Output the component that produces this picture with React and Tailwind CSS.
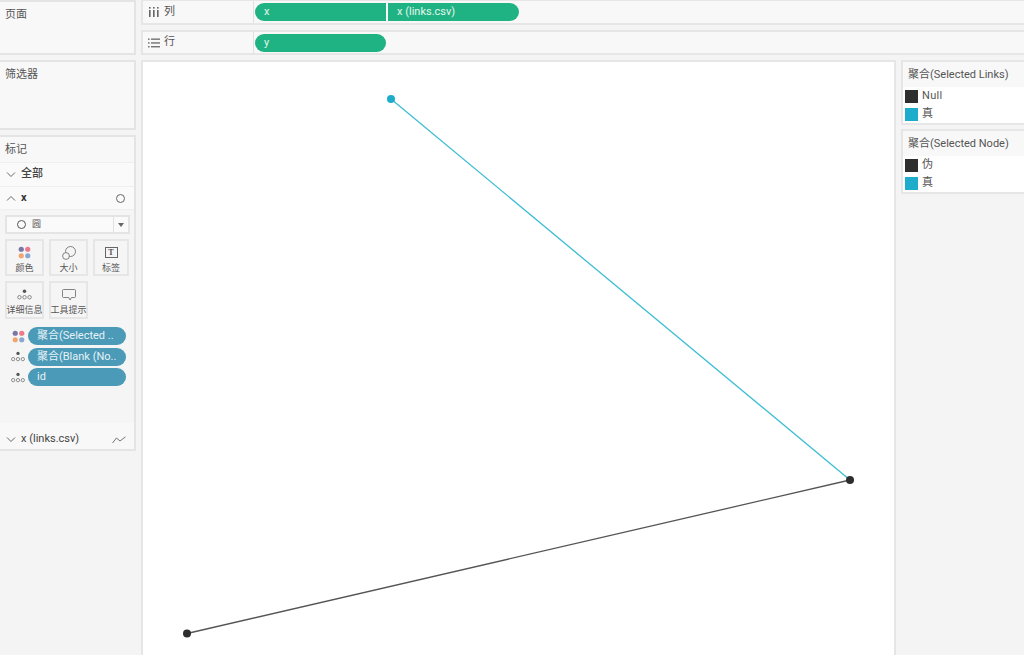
import React from "react";

const FONT = { fontFamily: '"Roboto", "Noto Sans CJK SC", sans-serif' };

const ColorDots = ({ className = "" }) => (
    <svg viewBox="0 0 14 14" className={className}>
        <circle cx="3.5" cy="3.5" r="2.8" fill="#7a76a6" />
        <circle cx="10.5" cy="3.5" r="2.8" fill="#ea7a8c" />
        <circle cx="3.5" cy="10.5" r="2.8" fill="#f2a56e" />
        <circle cx="10.5" cy="10.5" r="2.8" fill="#8aa8cf" />
    </svg>
);

const DetailDots = ({ className = "" }) => (
    <svg viewBox="0 0 16 12" className={className} fill="none" stroke="#666" strokeWidth="0.8">
        <circle cx="8" cy="2.5" r="1.9" fill="#555" stroke="none" />
        <circle cx="2.5" cy="9" r="1.9" />
        <circle cx="8" cy="9" r="1.9" />
        <circle cx="13.5" cy="9" r="1.9" />
    </svg>
);

const Chevron = ({ up }) => (
    <svg viewBox="0 0 10 6" className="w-[10px] h-[6px]" fill="none" stroke="#666" strokeWidth="1">
        <path d={up ? "M1 5.5 5 1.5 9 5.5" : "M1 .5 5 4.5 9 .5"} />
    </svg>
);

const MarkButton = ({ icon, label, className = "w-[39px] h-[37px]" }) => (
    <div className={`border-2 border-[#e6e6e6] flex flex-col items-center pt-[3px] ${className}`}>
        <div className="h-[17px] flex items-center justify-center">{icon}</div>
        <span className="mt-[1px] text-[9px] leading-[12px] text-[#555] whitespace-nowrap">{label}</span>
    </div>
);

const FieldRow = ({ icon, label }) => (
    <div className="flex items-center h-[20.5px]">
        <div className="w-[28px] flex justify-end pr-[3px]">{icon}</div>
        <div className="w-[98px] h-[18px] rounded-full bg-[#4a9ab8] text-[#e6f2f6] text-[11px] leading-[18px] pl-[9px] whitespace-nowrap overflow-hidden">
            {label}
        </div>
    </div>
);

const LegendItem = ({ color, label }) => (
    <div className="flex items-center h-[18px] pl-[2px]">
        <div className="w-[13px] h-[13px]" style={{ backgroundColor: color }} />
        <span className="ml-[4px] pt-[1px] text-[11px] text-[#555] tracking-[0.3px]">{label}</span>
    </div>
);

const Shelf = ({ icon, label, className = "", children }) => (
    <div className={`h-[25px] shrink-0 flex border-2 border-r-0 border-[#e6e6e6] bg-[#f8f8f8] ${className}`}>
        <div className="w-[111px] flex items-center pl-[4px] border-r border-[#e0e0e0] shrink-0">
            <span className="w-[14px] flex justify-center">{icon}</span>
            <span className="ml-[3px] text-[11px] text-[#555]">{label}</span>
        </div>
        <div className="flex items-center pl-[1px] gap-[2px]">{children}</div>
    </div>
);

const Pill = ({ className, label }) => (
    <div className={`h-[18px] bg-[#1fb282] text-[#e4f6ef] text-[11px] leading-[18px] whitespace-nowrap ${className}`}>{label}</div>
);

export default function App() {
    return (
        <div className="w-[1024px] h-[655px] overflow-hidden flex bg-[#f4f4f4]" style={FONT}>
            {/* left column */}
            <div className="w-[136px] shrink-0 flex flex-col">
                <div className="h-[55px] border-2 border-l-0 border-[#e4e4e4] bg-[#f8f8f8] pl-[5px] pt-[5px] text-[11px] text-[#555]">页面</div>
                <div className="mt-[5px] h-[70px] border-2 border-l-0 border-[#e4e4e4] bg-[#f8f8f8] pl-[5px] pt-[5px] text-[11px] text-[#555]">筛选器</div>
                <div className="mt-[5px] h-[316px] border-2 border-l-0 border-[#e4e4e4] bg-[#f5f5f5] flex flex-col">
                    <div className="h-[25px] bg-[#f8f8f8] pl-[5px] pt-[1px] flex items-center text-[11px] text-[#555]">标记</div>
                    <div className="h-[24px] bg-[#fafafa] border-t border-[#efefef] pl-[6px] flex items-center">
                        <Chevron />
                        <span className="ml-[5px] text-[11px] font-medium text-[#444]">全部</span>
                    </div>
                    <div className="h-[23px] bg-[#fafafa] border-t border-[#efefef] pl-[6px] pr-[9px] flex items-center">
                        <Chevron up />
                        <span className="ml-[5px] text-[11px] font-bold text-[#333]">x</span>
                        <span className="ml-auto w-[9px] h-[9px] rounded-full border border-[#666]" />
                    </div>
                    <div className="border-t border-[#efefef] pt-[5px] pl-[5px]">
                        <div className="w-[125px] h-[19px] border-2 border-[#e4e4e4] bg-[#fafafa] flex items-center">
                            <span className="ml-[10px] w-[9px] h-[9px] rounded-full border border-[#555]" />
                            <span className="ml-[6px] text-[9px] text-[#555]">圆</span>
                            <div className="ml-auto w-[15px] h-full border-l border-[#e0e0e0] flex items-center justify-center">
                                <span className="w-0 h-0 border-x-[3px] border-x-transparent border-t-[4px] border-t-[#666]" />
                            </div>
                        </div>
                        <div className="mt-[5px] flex gap-[5px]">
                            <MarkButton icon={<ColorDots className="w-[13px] h-[13px]" />} label="颜色" />
                            <MarkButton
                                icon={
                                    <svg viewBox="0 0 14 14" className="w-[14px] h-[14px]" fill="none" stroke="#666" strokeWidth="0.8">
                                        <circle cx="8.5" cy="5.5" r="5" />
                                        <circle cx="4" cy="10" r="3.4" fill="#f5f5f5" />
                                    </svg>
                                }
                                label="大小"
                            />
                            <MarkButton
                                className="w-[36px] h-[37px]"
                                icon={
                                    <div className="w-[13px] h-[11px] border border-[#666] flex items-center justify-center text-[8px] font-bold leading-none text-[#555]" style={{ fontFamily: '"Liberation Serif", serif' }}>T</div>
                                }
                                label="标签"
                            />
                        </div>
                        <div className="mt-[5px] flex gap-[5px]">
                            <MarkButton className="w-[39px] h-[38px]" icon={<DetailDots className="w-[15px] h-[11px]" />} label="详细信息" />
                            <MarkButton
                                className="w-[39px] h-[38px]"
                                icon={
                                    <svg viewBox="0 0 14 12" className="w-[14px] h-[12px]" fill="none" stroke="#666" strokeWidth="0.8">
                                        <path d="M1.5.5h11a1 1 0 0 1 1 1v6a1 1 0 0 1-1 1H9.5L8 11 6.8 8.5H1.5a1 1 0 0 1-1-1v-6a1 1 0 0 1 1-1Z" />
                                    </svg>
                                }
                                label="工具提示"
                            />
                        </div>
                    </div>
                    <div className="mt-[7px]">
                        <FieldRow icon={<ColorDots className="w-[13px] h-[13px]" />} label="聚合(Selected .." />
                        <FieldRow icon={<DetailDots className="w-[14px] h-[11px]" />} label="聚合(Blank (No.." />
                        <FieldRow icon={<DetailDots className="w-[14px] h-[11px]" />} label="id" />
                    </div>
                    <div className="mt-auto h-[26px] bg-[#f8f8f8] pt-[7px] pl-[6px] pr-[8px] flex items-center">
                        <Chevron />
                        <span className="ml-[5px] text-[11px] text-[#444]">x (links.csv)</span>
                        <svg viewBox="0 0 14 8" className="ml-auto w-[14px] h-[8px]" fill="none" stroke="#666" strokeWidth="0.9">
                            <path d="M.5 7 4.5 2 8 5 13.5 .8" />
                        </svg>
                    </div>
                </div>
            </div>

            {/* shelves + view */}
            <div className="ml-[5px] flex-1 min-w-0 flex flex-col">
                <Shelf
                    className="border-t-[1px]"
                    label="列"
                    icon={
                        <svg viewBox="0 0 10 10" className="w-[10px] h-[10px]" fill="#666">
                            <rect x="0" y="3" width="1.6" height="7" />
                            <rect x="4" y="3" width="1.6" height="7" />
                            <rect x="8" y="3" width="1.6" height="7" />
                            <rect x="0" y="0" width="1.6" height="1.6" />
                            <rect x="4" y="0" width="1.6" height="1.6" />
                            <rect x="8" y="0" width="1.6" height="1.6" />
                        </svg>
                    }
                >
                    <Pill className="w-[131px] rounded-l-full pl-[9px]" label="x" />
                    <Pill className="w-[131px] rounded-r-full pl-[9px]" label="x (links.csv)" />
                </Shelf>
                <Shelf
                    className="mt-[5px]"
                    label="行"
                    icon={
                        <svg viewBox="0 0 12 10" className="w-[12px] h-[10px]" fill="#666">
                            <rect x="0" y="0.5" width="1.6" height="1.3" />
                            <rect x="3" y="0.5" width="9" height="1.3" />
                            <rect x="0" y="4.3" width="1.6" height="1.3" />
                            <rect x="3" y="4.3" width="9" height="1.3" />
                            <rect x="0" y="8.1" width="1.6" height="1.3" />
                            <rect x="3" y="8.1" width="9" height="1.3" />
                        </svg>
                    }
                >
                    <Pill className="w-[131px] rounded-full pl-[9px]" label="y" />
                </Shelf>
                <div className="mt-[5px] flex-1 min-h-0 flex">
                    <div className="w-[755px] shrink-0 bg-white border-2 border-b-0 border-[#e6e6e6] overflow-hidden">
                        <svg viewBox="0 0 751 594" className="w-[751px] h-[594px]">
                            <line x1="248" y1="37" x2="707" y2="418" stroke="#3dbdd3" strokeWidth="1.3" />
                            <line x1="707" y1="418" x2="44" y2="571.5" stroke="#555" strokeWidth="1.3" />
                            <circle cx="248" cy="37" r="4" fill="#1eaccd" />
                            <circle cx="707" cy="418" r="4" fill="#2d2d2d" />
                            <circle cx="44" cy="571.5" r="4" fill="#2d2d2d" />
                        </svg>
                    </div>

                    {/* legends */}
                    <div className="ml-[5px] flex-1 min-w-0 flex flex-col">
                        <div className="h-[65px] border-2 border-r-0 border-[#e6e6e6] bg-white">
                            <div className="h-[25px] bg-[#f8f8f8] pl-[5px] pt-[2px] flex items-center text-[11px] text-[#555] whitespace-nowrap">聚合(Selected Links)</div>
                            <LegendItem color="#2e2e2e" label="Null" />
                            <LegendItem color="#1eaccd" label="真" />
                        </div>
                        <div className="mt-[4px] h-[65px] border-2 border-r-0 border-[#e6e6e6] bg-white">
                            <div className="h-[25px] bg-[#f8f8f8] pl-[5px] pt-[2px] flex items-center text-[11px] text-[#555] whitespace-nowrap">聚合(Selected Node)</div>
                            <LegendItem color="#2e2e2e" label="伪" />
                            <LegendItem color="#1eaccd" label="真" />
                        </div>
                    </div>
                </div>
            </div>
        </div>
    );
}
